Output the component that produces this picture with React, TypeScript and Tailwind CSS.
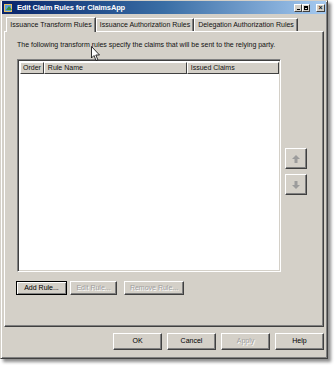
import React from "react";

function ClassicButton({
    label,
    width,
    disabled,
    isDefault,
    className = "",
}: {
    label: string;
    width: string;
    disabled?: boolean;
    isDefault?: boolean;
    className?: string;
}) {
    const edge = isDefault
        ? "border border-black shadow-[inset_1px_1px_0_#fff,inset_-1px_-1px_0_#808080]"
        : "border border-t-white border-l-white border-r-[#404040] border-b-[#404040] shadow-[inset_-1px_-1px_0_#808080]";
    return (
        <div
            className={`${width} ${edge} ${className} bg-[#d4d0c8] flex items-center justify-center ${
                disabled ? "text-[#a0a0a0] [text-shadow:1px_1px_0_#fff]" : "text-black"
            }`}
        >
            {label}
        </div>
    );
}

function ArrowButton({ up }: { up?: boolean }) {
    return (
        <div className="w-[22px] h-[21px] bg-[#d4d0c8] border border-t-white border-l-white border-r-[#404040] border-b-[#404040] shadow-[inset_-1px_-1px_0_#808080] flex items-center justify-center">
            <svg width="10" height="10" viewBox="0 0 10 10">
                {up ? (
                    <path d="M5 1 L9 5 L6.5 5 L6.5 9 L3.5 9 L3.5 5 L1 5 Z" fill="#9c9c9c" />
                ) : (
                    <path d="M5 9 L9 5 L6.5 5 L6.5 1 L3.5 1 L3.5 5 L1 5 Z" fill="#9c9c9c" />
                )}
            </svg>
        </div>
    );
}

export default function App() {
    const tabs = [
        { label: "Issuance Transform Rules", width: "w-[90px]", active: true },
        { label: "Issuance Authorization Rules", width: "w-[98px]", active: false },
        { label: "Delegation Authorization Rules", width: "w-[104px]", active: false },
    ];

    return (
        <div className="w-[335px] h-[365px] bg-white font-['Liberation_Sans',Arial,sans-serif] text-[7px] text-[#111] relative">
            {/* dialog window */}
            <div className="w-[328px] h-[359px] bg-[#d4d0c8] border border-t-[#d4d0c8] border-l-[#d4d0c8] border-r-[#404040] border-b-[#404040] shadow-[inset_1px_1px_0_#fff,inset_-1px_-1px_0_#808080,3px_3px_3px_rgba(0,0,0,0.45)] flex flex-col">
                {/* title bar */}
                <div className="h-[13px] mx-[1px] bg-gradient-to-r from-[#0a246a] via-[#3a6ea5] to-[#a6caf0] flex items-center">
                    <svg width="10" height="10" viewBox="0 0 10 10" className="ml-[2px]">
                        <rect x="0" y="1" width="8" height="8" fill="#e8c060" />
                        <rect x="1" y="2" width="6" height="6" fill="#5aa0d8" />
                        <path d="M2 7 L5 3 L8 7 Z" fill="#3b8f3b" />
                    </svg>
                    <span className="ml-[3px] text-white font-bold text-[7.5px] tracking-[-0.15px]">
                        Edit Claim Rules for ClaimsApp
                    </span>
                    <div className="ml-auto flex items-center mr-[1px]">
                        <div className="w-[8px] h-[8px] bg-[#d4d0c8] border border-t-white border-l-white border-r-[#404040] border-b-[#404040] flex items-end justify-center">
                            <div className="w-[3px] h-[1px] bg-black mb-[1px]" />
                        </div>
                        <div className="w-[8px] h-[8px] bg-[#d4d0c8] border border-t-white border-l-white border-r-[#404040] border-b-[#404040] flex items-center justify-center">
                            <div className="w-[4px] h-[4px] border border-black border-t-2" />
                        </div>
                        <div className="ml-[6px] w-[9px] h-[8px] bg-[#d4d0c8] border border-t-white border-l-white border-r-[#404040] border-b-[#404040] flex items-center justify-center text-[7px] font-bold leading-none">
                            ×
                        </div>
                    </div>
                </div>

                {/* tabs */}
                <div className="flex items-end h-[15px] mt-[2px] pl-[5px]">
                    {tabs.map((tab) => (
                        <div
                            key={tab.label}
                            className={`${tab.width} ${
                                tab.active ? "h-[15px] relative z-10 -mb-[1px] bg-[#d4d0c8]" : "h-[13px]"
                            } border-t border-l border-t-white border-l-white border-r border-r-[#404040] shadow-[inset_-1px_0_0_#808080] flex items-center justify-center whitespace-nowrap`}
                        >
                            {tab.label}
                        </div>
                    ))}
                </div>

                {/* tab panel */}
                <div className="mx-[3px] h-[296px] border border-t-white border-l-white border-r-[#404040] border-b-[#404040] shadow-[inset_-1px_-1px_0_#808080] flex flex-col pl-[12px] pt-[8px]">
                    <div className="h-[10px] flex items-center whitespace-nowrap">
                        The following transform rules specify the claims that will be sent to the relying party.
                    </div>
                    <div className="flex mt-[9px]">
                        {/* list view */}
                        <div className="w-[264px] h-[213px] bg-white border border-t-[#808080] border-l-[#808080] border-r-white border-b-white shadow-[inset_1px_1px_0_#404040,inset_-1px_-1px_0_#d4d0c8] p-[1px]">
                            <div className="flex h-[12px] bg-[#d4d0c8] ml-[1px] mt-[1px]">
                                <div className="w-[24px] border border-t-white border-l-white border-r-[#404040] border-b-[#404040] flex items-center pl-[2px]">
                                    Order
                                </div>
                                <div className="w-[144px] border border-t-white border-l-white border-r-[#404040] border-b-[#404040] flex items-center pl-[3px]">
                                    Rule Name
                                </div>
                                <div className="w-[93px] border border-t-white border-l-white border-r-[#404040] border-b-[#404040] flex items-center pl-[3px]">
                                    Issued Claims
                                </div>
                            </div>
                        </div>
                        {/* reorder buttons */}
                        <div className="flex flex-col ml-[4px] mt-[89px] gap-[5px]">
                            <ArrowButton up />
                            <ArrowButton />
                        </div>
                    </div>
                    <div className="flex mt-[9px] h-[14px]">
                        <ClassicButton label="Add Rule..." width="w-[51px]" isDefault className="ml-[-1px]" />
                        <ClassicButton label="Edit Rule..." width="w-[47px]" disabled className="ml-[3px]" />
                        <ClassicButton label="Remove Rule..." width="w-[60px]" disabled className="ml-[7px]" />
                    </div>
                </div>

                {/* dialog buttons */}
                <div className="flex justify-end gap-[5px] mt-[6px] mr-[3px] h-[17px]">
                    <ClassicButton label="OK" width="w-[49px]" />
                    <ClassicButton label="Cancel" width="w-[49px]" />
                    <ClassicButton label="Apply" width="w-[49px]" disabled />
                    <ClassicButton label="Help" width="w-[49px]" />
                </div>
            </div>

            {/* mouse pointer */}
            <svg width="10" height="16" viewBox="0 0 10 16" className="absolute left-[91px] top-[46px]">
                <path d="M0.5 0.5 L0.5 12 L3 9.5 L5 14.5 L6.8 13.7 L4.8 9 L8.5 9 Z" fill="#fff" stroke="#000" strokeWidth="0.8" />
            </svg>
        </div>
    );
}
